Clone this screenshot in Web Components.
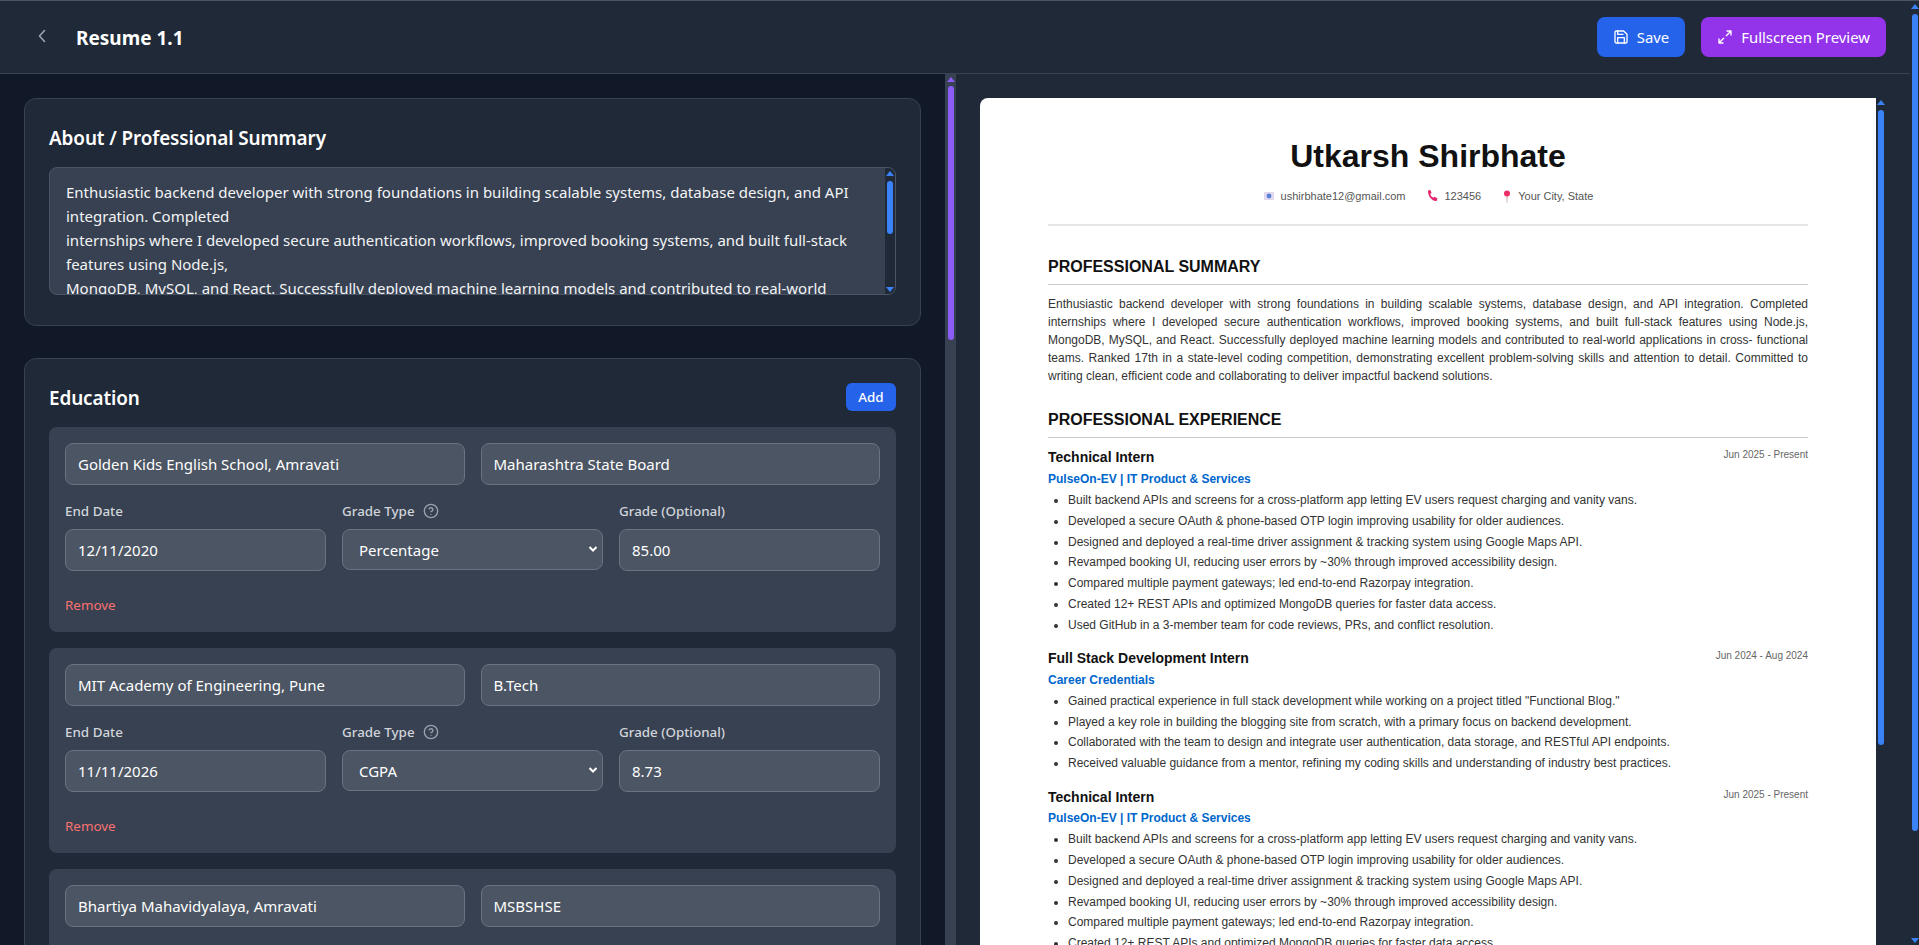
<!DOCTYPE html>
<html lang="en"><head><meta charset="utf-8"><title>Resume 1.1</title>
<style>
html,body{margin:0;height:945px;overflow:hidden;background:#1f2937}
body{font-family:"Noto Sans","Open Sans",sans-serif;color:#fff}
</style></head>
<body>
<app-shell>
  <top-bar slot="top" heading="Resume 1.1"></top-bar>
  <editor-pane slot="left">
    <about-card heading="About / Professional Summary">Enthusiastic backend developer with strong foundations in building scalable systems, database design, and API integration. Completed<br>internships where I developed secure authentication workflows, improved booking systems, and built full-stack features using Node.js,<br>MongoDB, MySQL, and React. Successfully deployed machine learning models and contributed to real-world<br>applications in cross-functional teams.</about-card>
    <education-card heading="Education">
      <edu-entry school="Golden Kids English School, Amravati" board="Maharashtra State Board" end="12/11/2020" type="Percentage" grade="85.00"></edu-entry>
      <edu-entry school="MIT Academy of Engineering, Pune" board="B.Tech" end="11/11/2026" type="CGPA" grade="8.73"></edu-entry>
      <edu-entry school="Bhartiya Mahavidyalaya, Amravati" board="MSBSHSE" end="11/11/2022" type="Percentage" grade="80.00"></edu-entry>
    </education-card>
  </editor-pane>
  <resume-pane slot="right">
    <resume-page name="Utkarsh Shirbhate">
      <resume-section heading="Professional Summary"><p class="x">Enthusiastic backend developer with strong foundations in building scalable systems, database design, and API integration. Completed internships where I developed secure authentication workflows, improved booking systems, and built full-stack features using Node.js, MongoDB, MySQL, and React. Successfully deployed machine learning models and contributed to real-world applications in cross- functional teams. Ranked 17th in a state-level coding competition, demonstrating excellent problem-solving skills and attention to detail. Committed to writing clean, efficient code and collaborating to deliver impactful backend solutions.</p></resume-section>
      <resume-section heading="Professional Experience">
        <resume-job title="Technical Intern" dates="Jun 2025 - Present" company="PulseOn-EV | IT Product &amp; Services">
          <li>Built backend APIs and screens for a cross-platform app letting EV users request charging and vanity vans.</li>
          <li>Developed a secure OAuth &amp; phone-based OTP login improving usability for older audiences.</li>
          <li>Designed and deployed a real-time driver assignment &amp; tracking system using Google Maps API.</li>
          <li>Revamped booking UI, reducing user errors by ~30% through improved accessibility design.</li>
          <li>Compared multiple payment gateways; led end-to-end Razorpay integration.</li>
          <li>Created 12+ REST APIs and optimized MongoDB queries for faster data access.</li>
          <li>Used GitHub in a 3-member team for code reviews, PRs, and conflict resolution.</li>
        </resume-job>
        <resume-job title="Full Stack Development Intern" dates="Jun 2024 - Aug 2024" company="Career Credentials">
          <li>Gained practical experience in full stack development while working on a project titled "Functional Blog."</li>
          <li>Played a key role in building the blogging site from scratch, with a primary focus on backend development.</li>
          <li>Collaborated with the team to design and integrate user authentication, data storage, and RESTful API endpoints.</li>
          <li>Received valuable guidance from a mentor, refining my coding skills and understanding of industry best practices.</li>
        </resume-job>
        <resume-job title="Technical Intern" dates="Jun 2025 - Present" company="PulseOn-EV | IT Product &amp; Services">
          <li>Built backend APIs and screens for a cross-platform app letting EV users request charging and vanity vans.</li>
          <li>Developed a secure OAuth &amp; phone-based OTP login improving usability for older audiences.</li>
          <li>Designed and deployed a real-time driver assignment &amp; tracking system using Google Maps API.</li>
          <li>Revamped booking UI, reducing user errors by ~30% through improved accessibility design.</li>
          <li>Compared multiple payment gateways; led end-to-end Razorpay integration.</li>
          <li>Created 12+ REST APIs and optimized MongoDB queries for faster data access.</li>
        </resume-job>
      </resume-section>
    </resume-page>
  </resume-pane>
</app-shell>
<script>
const UI='"Noto Sans","Open Sans",sans-serif';
const define=(name,render)=>customElements.define(name,class extends HTMLElement{
  connectedCallback(){ if(this.shadowRoot) return; const r=this.attachShadow({mode:'open'}); r.innerHTML=render(this); }
});
const attr=(el,n)=>(el.getAttribute(n)||'').replace(/&/g,'&amp;');

define('scroll-bar',el=>{
  const c=attr(el,'color'),w=attr(el,'width')||'11',bg=attr(el,'track')||'transparent',pad=attr(el,'pad')||'3';
  const th=attr(el,'thumb'),gap=attr(el,'gap'),top=attr(el,'top')||'3',end=el.hasAttribute('down');
  return `<style>
  :host{display:flex;flex-direction:column;align-items:center;flex:none;width:${w}px;background:${bg};overflow:hidden;box-sizing:border-box;padding-top:${top}px}
  svg{display:block;flex:none}
  .t{width:6px;border-radius:3px;background:${c};height:${th}px;margin-top:${gap}px;flex:none}
  .d{margin-top:auto;margin-bottom:${pad}px}
  </style>
  <svg width="8" height="5" viewBox="0 0 8 5"><path d="M4 0 8 5H0z" fill="${c}"/></svg>
  <div class="t"></div>
  ${end?`<svg class="d" width="8" height="5" viewBox="0 0 8 5"><path d="M0 0H8L4 5z" fill="${c}"/></svg>`:''}`;
});

define('app-shell',()=>`<style>
  :host{display:flex;width:1919px;height:945px;box-sizing:border-box;border-top:1px solid #4b5563;background:#1f2937;overflow:hidden}
  .main{flex:1;min-width:0;display:flex;flex-direction:column}
  .cols{flex:1;min-height:0;display:flex}
  </style>
  <div class="main"><slot name="top"></slot><div class="cols"><slot name="left"></slot><slot name="right"></slot></div></div>
  <scroll-bar color="#3b82f6" width="9" top="3" gap="5" thumb="817" pad="2" down></scroll-bar>`);

define('top-bar',el=>`<style>
  :host{display:flex;align-items:center;height:72px;flex:none;box-sizing:content-box;border-bottom:1px solid #374151;padding:0 24px;background:#1f2937;font-family:${UI}}
  .back{width:24px;height:24px;margin:-2px 22px 0 6px;display:block;color:#9ca3af}
  h1{margin:0;font-size:19px;font-weight:700;color:#fff;line-height:28px;padding-top:2px}
  .sp{flex:1}
  .b{display:flex;align-items:center;gap:8px;height:40px;padding:0 16px;border-radius:8px;color:#fff;font-size:14.900px;margin-left:16px}
  .b svg{width:16px;height:16px;flex:none}
  .s{background:#2563eb}.f{background:#9333ea}
  </style>
  <svg class="back" viewBox="0 0 24 24" fill="none" stroke="currentColor" stroke-width="1.6" stroke-linecap="round" stroke-linejoin="round"><path d="M14.5 6.500 9.500 12l5 5.500"/></svg>
  <h1>${attr(el,'heading')}</h1><div class="sp"></div>
  <div class="b s"><svg viewBox="0 0 24 24" fill="none" stroke="currentColor" stroke-width="2" stroke-linecap="round" stroke-linejoin="round"><path d="M19 21H5a2 2 0 0 1-2-2V5a2 2 0 0 1 2-2h11l5 5v11a2 2 0 0 1-2 2z"/><path d="M17 21v-8H7v8M7 3v5h8"/></svg>Save</div>
  <div class="b f"><svg viewBox="0 0 24 24" fill="none" stroke="currentColor" stroke-width="2" stroke-linecap="round" stroke-linejoin="round"><path d="M15 3h6v6M9 21H3v-6M21 3l-7 7M3 21l7-7"/></svg>Fullscreen Preview</div>`);

define('editor-pane',()=>`<style>
  :host{display:flex;flex:none;width:956px;height:871px;overflow:hidden;background:#111827}
  .in{flex:1;min-width:0;padding:24px 24px 0 24px;display:flex;flex-direction:column;gap:32px;overflow:hidden}
  </style><div class="in"><slot></slot></div>
  <scroll-bar color="#8b5cf6" track="#374151" width="11" top="3" gap="4" thumb="254"></scroll-bar>`);

define('about-card',el=>`<style>
  :host{display:block;flex:none;box-sizing:border-box;height:228px;border:1px solid #374151;border-radius:12px;background:#1f2937;padding:24px;font-family:${UI}}
  h2{margin:0 0 15px;padding-top:1px;font-size:18.900px;font-weight:600;line-height:28px;color:#fff;letter-spacing:-.1px}
  .ta{display:flex;height:128px;box-sizing:border-box;border:1px solid #4b5563;border-radius:8px;overflow:hidden;background:#374151}
  .tx{flex:1;min-width:0;padding:12px 0 0 16px;font-size:15px;line-height:24px;color:#f3f4f6}
  </style><h2>${attr(el,'heading')}</h2>
  <div class="ta"><div class="tx"><slot></slot></div><scroll-bar color="#3b82f6" track="#1f2937" width="10" top="3" gap="5" thumb="53" pad="2" down></scroll-bar></div>`);

define('education-card',el=>`<style>
  :host{display:block;flex:none;box-sizing:border-box;border:1px solid #374151;border-radius:12px;background:#1f2937;padding:24px;font-family:${UI}}
  .h{display:flex;align-items:center;justify-content:space-between;margin-bottom:16px;height:28px}
  h2{margin:0;padding-top:1px;font-size:18.900px;font-weight:600;line-height:28px;color:#fff;letter-spacing:-.1px}
  .add{height:28px;width:50px;border-radius:6px;background:#2563eb;color:#fff;font-size:13.400px;font-weight:500;display:flex;align-items:center;justify-content:center}
  .l{display:flex;flex-direction:column;gap:16px}
  </style><div class="h"><h2>${attr(el,'heading')}</h2><div class="add">Add</div></div><div class="l"><slot></slot></div>`);

define('text-field',el=>`<style>
  :host{display:flex;align-items:center;box-sizing:border-box;height:42px;min-width:0;padding:0 12px;border:1px solid #6b7280;border-radius:8px;background:#4b5563;color:#fff;font-size:15px;white-space:nowrap;overflow:hidden}
  </style><slot></slot>`);

define('select-field',el=>`<style>
  :host{display:flex;align-items:center;justify-content:space-between;box-sizing:border-box;height:41px;min-width:0;padding:0 4px 0 16px;border:1px solid #6b7280;border-radius:8px;background:#4b5563;color:#fff;font-size:15px;white-space:nowrap}
  svg{width:10px;height:8px;margin-top:-2px;display:block}
  </style><slot></slot><svg viewBox="0 0 10 8"><path d="M1.500 2 5 5.500 8.500 2" fill="none" stroke="#fff" stroke-width="2"/></svg>`);

define('edu-entry',el=>`<style>
  :host{display:block;flex:none;background:#374151;border-radius:8px;padding:16px 16px 17px;font-family:${UI}}
  .two{display:grid;grid-template-columns:1fr 1fr;gap:16px;margin-bottom:16px}
  .three{display:grid;grid-template-columns:1fr 1fr 1fr;gap:16px}
  .lb{display:flex;align-items:center;gap:8px;height:20px;margin-bottom:8px;font-size:13.400px;font-weight:500;color:#d1d5db}
  .lb svg{width:16px;height:16px;color:#9ca3af;display:block}
  .rm{margin-top:24px;height:20px;line-height:20px;font-size:13.400px;color:#f87171}
  </style>
  <div class="two"><text-field>${attr(el,'school')}</text-field><text-field>${attr(el,'board')}</text-field></div>
  <div class="three">
    <div><div class="lb">End Date</div><text-field>${attr(el,'end')}</text-field></div>
    <div><div class="lb">Grade Type<svg viewBox="0 0 24 24" fill="none" stroke="currentColor" stroke-width="2" stroke-linecap="round" stroke-linejoin="round"><circle cx="12" cy="12" r="10"/><path d="M9.100 9a3 3 0 0 1 5.800 1c0 2-3 3-3 3M12 17h.01"/></svg></div><select-field>${attr(el,'type')}</select-field></div>
    <div><div class="lb">Grade (Optional)</div><text-field>${attr(el,'grade')}</text-field></div>
  </div>
  <div class="rm">Remove</div>`);

define('resume-pane',()=>`<style>
  :host{display:flex;flex:1;min-width:0;height:871px;overflow:hidden;padding:24px 24px 0;box-sizing:border-box;background:#1f2937}
  .c{flex:1;min-width:0;overflow:hidden;height:1400px}
  </style><div class="c"><slot></slot></div>
  <scroll-bar color="#3b82f6" width="10" top="2" gap="5" thumb="635"></scroll-bar>`);

define('resume-page',el=>`<style>
  :host{display:block;background:#fff;border-radius:8px 0 0 0;padding:39px 68px 0;height:1400px;box-sizing:border-box;font-family:"Liberation Sans",Arial,sans-serif;color:#333}
  h1{margin:0;text-align:center;font-size:32px;line-height:38px;font-weight:700;color:#111}
  .ct{display:flex;justify-content:center;gap:22px;margin-top:13px;height:16px;font-size:11px;line-height:16px;color:#555;padding-bottom:20px;border-bottom:2px solid #e5e5e5;margin-bottom:29px}
  .ct span{display:flex;align-items:center;gap:6px}
  .ct span:first-child{gap:7px}
  .ct span:last-child{gap:7px;margin-right:-1px}
  svg{display:block;flex:none}
  </style><h1>${attr(el,'name')}</h1>
  <div class="ct">
    <span><svg width="10" height="8" viewBox="0 0 10 8"><rect width="10" height="8" fill="#e3d9ee"/><circle cx="5" cy="4" r="2.400" fill="#5a7fd6"/></svg>ushirbhate12@gmail.com</span>
    <span><svg width="11" height="12" viewBox="0 0 11 12"><path d="M1 .5 3.500 0l1 3-1.300 1c.5 1.700 1.600 3 3 3.800L7.500 6.800l3 1.700-.8 2.500C5 11.500.6 6 1 .5z" fill="#e0266e"/></svg>123456</span>
    <span><svg width="8" height="13" viewBox="0 0 8 13"><circle cx="4" cy="3.400" r="3" fill="#ec2f67"/><path d="M3.500 6h1L4.200 13h-.4z" fill="#b98a8a"/></svg>Your City, State</span>
  </div><slot></slot>`);

define('resume-section',el=>`<style>
  :host{display:block;margin-bottom:24px}
  h2{margin:0 0 10px;padding-top:.5px;font-size:16px;line-height:22px;font-weight:700;color:#111;text-transform:uppercase;padding-bottom:6px;border-bottom:1px solid #ccc}
  ::slotted(p){margin:0;font-size:12px;line-height:18.100px;text-align:justify;color:#333}
  </style><h2>${attr(el,'heading')}</h2><slot></slot>`);

define('resume-job',el=>`<style>
  :host{display:block;margin-bottom:12.700px}
  .r{display:flex;justify-content:space-between;align-items:flex-start}
  .t{font-size:14px;line-height:18px;font-weight:700;color:#111}
  .d{font-size:10px;line-height:14px;color:#666}
  .c{font-size:12px;line-height:18px;font-weight:700;color:#0066cc;margin-top:3.500px}
  ul{margin:3px 0 0;padding:0 0 .02px 20px}
  ::slotted(li){font-size:12px;line-height:18px;margin-bottom:2.800px;color:#333}
  </style><div class="r"><div class="t">${attr(el,'title')}</div><div class="d">${attr(el,'dates')}</div></div>
  <div class="c">${attr(el,'company')}</div><ul><slot></slot></ul>`);
</script>
</body></html>
